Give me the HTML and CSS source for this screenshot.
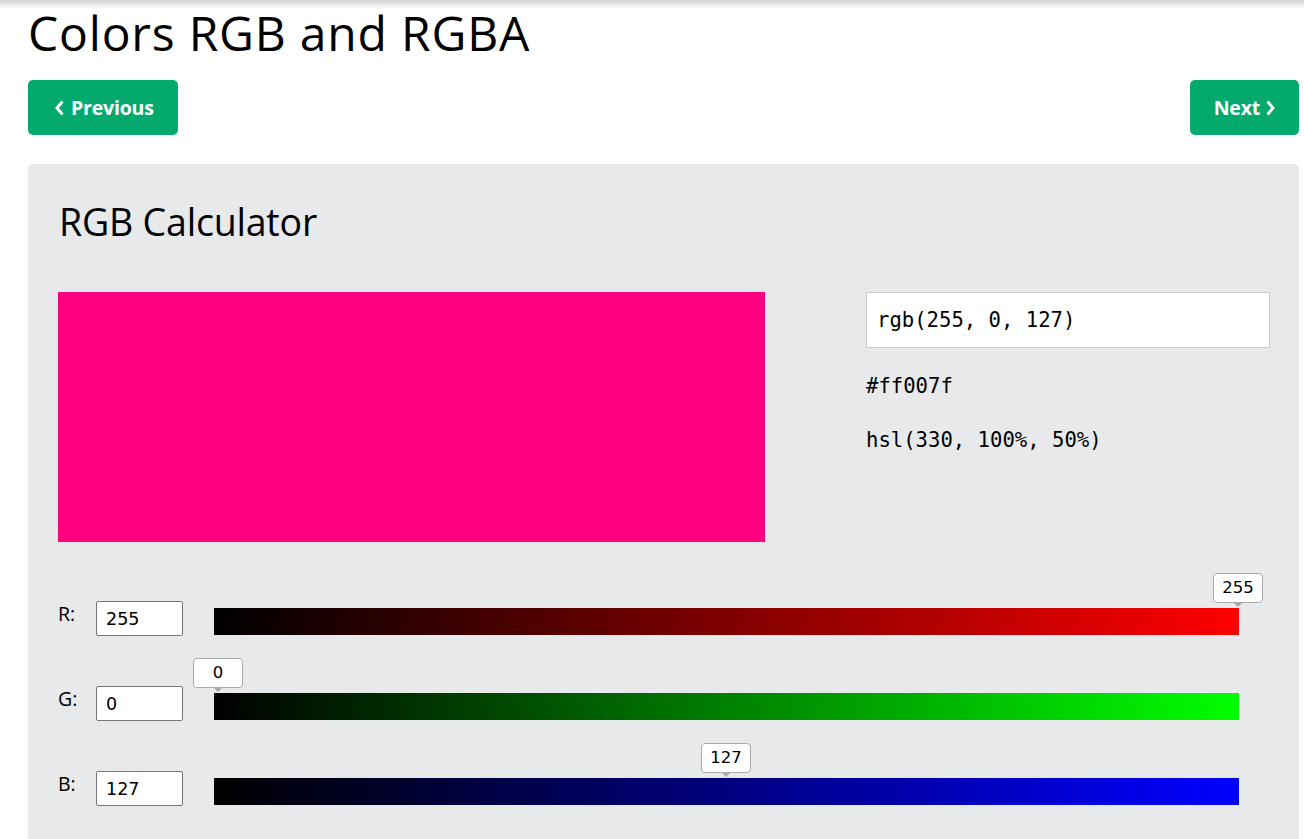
FILE: index.html
```html
<!DOCTYPE html>
<html>
<head>
<meta charset="utf-8">
<title>Colors RGB and RGBA</title>
<link rel="stylesheet" href="styles.css">
</head>
<body>
<div class="page">
  <h1 class="title">Colors RGB and RGBA</h1>
  <div class="nav">
    <a class="btn btn-prev"><svg class="chev" width="9" height="16" viewBox="0 0 9 16"><path d="M7.5 1.5 L2 8 L7.5 14.5" fill="none" stroke="#fff" stroke-width="2.9" stroke-linejoin="miter"/></svg>Previous</a>
    <a class="btn btn-next">Next<svg class="chev" width="9" height="16" viewBox="0 0 9 16"><path d="M1.5 1.5 L7 8 L1.5 14.5" fill="none" stroke="#fff" stroke-width="2.9" stroke-linejoin="miter"/></svg></a>
  </div>
  <div class="panel">
    <h2 class="panel-title">RGB Calculator</h2>
    <div class="color-area">
      <div class="swatch"></div>
      <div class="values">
        <div class="rgb-box">rgb(255, 0, 127)</div>
        <div class="val">#ff007f</div>
        <div class="val">hsl(330, 100%, 50%)</div>
      </div>
    </div>
    <div class="sliders">
      <div class="row">
        <span class="lbl">R:</span>
        <div class="num">255</div>
        <div class="bar bar-r">
          <div class="tip" style="left: 999px">255</div>
        </div>
      </div>
      <div class="row">
        <span class="lbl">G:</span>
        <div class="num">0</div>
        <div class="bar bar-g">
          <div class="tip" style="left: -21px">0</div>
        </div>
      </div>
      <div class="row">
        <span class="lbl">B:</span>
        <div class="num">127</div>
        <div class="bar bar-b">
          <div class="tip" style="left: 487px">127</div>
        </div>
      </div>
    </div>
  </div>
</div>
</body>
</html>
```
FILE: styles.css
```css
* { box-sizing: border-box; }
html, body { margin: 0; padding: 0; background: #fff; }
body { font-family: "Open Sans", "Noto Sans", sans-serif; color: #000; }

.page {
  padding: 0 5px 0 28px;
  height: 839px;
  overflow: hidden;
  background: linear-gradient(#d4d4d4, #fff 9px) no-repeat;
}

.title {
  margin: 0;
  padding-top: 0;
  font-size: 48px;
  font-weight: 400;
  line-height: 66px;
  letter-spacing: 0.8px;
}

.nav {
  display: flex;
  justify-content: space-between;
  margin-top: 14px;
}

.btn {
  display: flex;
  align-items: center;
  height: 55px;
  background: #04aa6d;
  color: #fff;
  font-weight: 700;
  font-size: 19.5px;
  border-radius: 5px;
  text-decoration: none;
  letter-spacing: -0.2px;
}
.btn-prev { padding: 0 24px 0 27px; gap: 7px; }
.btn-next { padding: 0 24px 0 24px; gap: 6px; }
.chev { display: block; }

.panel {
  margin-top: 29px;
  background: #e7e9eb;
  border-radius: 5px;
  padding: 28px 29px 40px 30px;
}

.panel-title {
  margin: 0 0 0 1px;
  font-size: 37.5px;
  font-weight: 400;
  line-height: 60px;
  letter-spacing: -0.2px;
}

.color-area {
  display: flex;
  gap: 101px;
  margin-top: 40px;
}
.swatch {
  width: 707px;
  height: 250px;
  background: #ff007f;
}
.values { width: 404px; }
.rgb-box {
  height: 56px;
  background: #fff;
  border: 1px solid #ccc;
  padding: 0 10px;
  font-family: "DejaVu Sans Mono", "Liberation Mono", monospace;
  font-size: 20.6px;
  line-height: 55px;
}
.val {
  font-family: "DejaVu Sans Mono", "Liberation Mono", monospace;
  font-size: 20.6px;
  line-height: 28px;
}
.values .val:nth-child(2) { margin-top: 24px; }
.values .val:nth-child(3) { margin-top: 26px; }

.sliders { margin-top: 59px; }
.row {
  display: flex;
  align-items: flex-start;
  height: 35px;
  margin-bottom: 50px;
}
.lbl {
  width: 38px;
  font-size: 19.5px;
  line-height: 26px;
}
.num {
  width: 87px;
  height: 35px;
  background: #fff;
  border: 1px solid #767676;
  border-radius: 2px;
  padding-left: 9px;
  font-family: "DejaVu Sans", Verdana, sans-serif;
  font-size: 17.5px;
  line-height: 34px;
}
.bar {
  position: relative;
  width: 1025px;
  height: 27px;
  margin: 7px 0 0 31px;
}
.bar-r { background: linear-gradient(to right, #000, #f00); }
.bar-g { background: linear-gradient(to right, #000, #0f0); }
.bar-b { background: linear-gradient(to right, #000, #00f); }

.tip {
  position: absolute;
  bottom: 32px;
  width: 50px;
  height: 30px;
  background: #fff;
  border: 1px solid #aaa;
  border-radius: 4px;
  text-align: center;
  font-family: "DejaVu Sans", Verdana, sans-serif;
  font-size: 16.5px;
  line-height: 28px;
}
.tip::after {
  content: "";
  position: absolute;
  left: 50%;
  top: 100%;
  margin-left: -5px;
  border: 5px solid transparent;
  border-top-color: #aaa;
  border-bottom: 0;
}
```
